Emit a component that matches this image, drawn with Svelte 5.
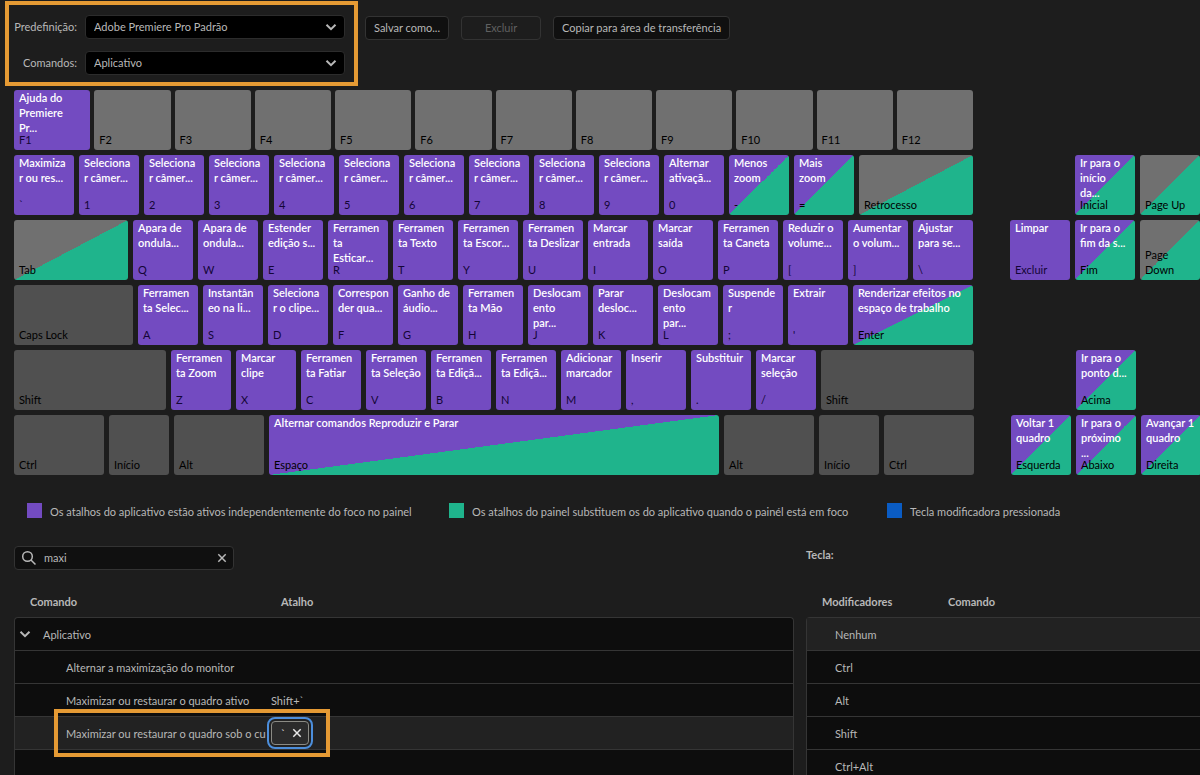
<script>
  let preset = $state('Adobe Premiere Pro Padrão')
  let scope = $state('Aplicativo')
  let search = $state('maxi')

  // k: key cap, c: assigned command, t: kind, w: width when not a square key
  const app = (k, c) => ({ k, c, t: 'app' })
  const both = (k, c, w) => ({ k, c, w, t: 'both' })
  const panel = (k, w) => ({ k, w, t: 'panel' })
  const mod = (k, w) => ({ k, w, t: 'mod' })
  const free = (k) => ({ k, t: 'free' })
  const gap = (w) => ({ w, t: 'gap' })

  const rows = [
    [
      app('`', 'Maximiza\nr ou res...'),
      ...[1, 2, 3, 4, 5, 6, 7, 8, 9].map((n) => app(n, 'Seleciona\nr câmer...')),
      app('0', 'Alternar\nativaçã...'),
      both('-', 'Menos\nzoom'),
      both('=', 'Mais\nzoom'),
      panel('Retrocesso', 114),
      gap(27), gap(60),
      both('Inicial', 'Ir para o\ninício\nda...'),
      panel('Page Up')
    ],
    [
      panel('Tab', 114),
      app('Q', 'Apara de\nondula...'),
      app('W', 'Apara de\nondula...'),
      app('E', 'Estender\nedição s...'),
      app('R', 'Ferramen\nta\nEsticar...'),
      app('T', 'Ferramen\nta Texto'),
      app('Y', 'Ferramen\nta Escor...'),
      app('U', 'Ferramen\nta Deslizar'),
      app('I', 'Marcar\nentrada'),
      app('O', 'Marcar\nsaída'),
      app('P', 'Ferramen\nta Caneta'),
      app('[', 'Reduzir o\nvolume...'),
      app(']', 'Aumentar\no volum...'),
      app('\\', 'Ajustar\npara se...'),
      gap(27),
      app('Excluir', 'Limpar'),
      both('Fim', 'Ir para o\nfim da s...'),
      panel('Page\nDown')
    ],
    [
      mod('Caps Lock', 119),
      app('A', 'Ferramen\nta Selec...'),
      app('S', 'Instantân\neo na li...'),
      app('D', 'Seleciona\nr o clipe...'),
      app('F', 'Correspon\nder qua...'),
      app('G', 'Ganho de\náudio...'),
      app('H', 'Ferramen\nta Mão'),
      app('J', 'Deslocam\nento\npar...'),
      app('K', 'Parar\ndesloc...'),
      app('L', 'Deslocam\nento\npar...'),
      app(';', 'Suspende\nr'),
      app("'", 'Extrair'),
      both('Enter', 'Renderizar efeitos no\nespaço de trabalho', 120)
    ],
    [
      mod('Shift', 152),
      app('Z', 'Ferramen\nta Zoom'),
      app('X', 'Marcar\nclipe'),
      app('C', 'Ferramen\nta Fatiar'),
      app('V', 'Ferramen\nta Seleção'),
      app('B', 'Ferramen\nta Ediçã...'),
      app('N', 'Ferramen\nta Ediçã...'),
      app('M', 'Adicionar\nmarcador'),
      app(',', 'Inserir'),
      app('.', 'Substituir'),
      app('/', 'Marcar\nseleção'),
      mod('Shift', 153),
      gap(27), gap(60),
      both('Acima', 'Ir para o\nponto d...')
    ],
    [
      mod('Ctrl', 90),
      mod('Início', 60),
      mod('Alt', 90),
      both('Espaço', 'Alternar comandos Reproduzir e Parar', 450),
      mod('Alt', 90),
      mod('Início', 60),
      mod('Ctrl', 90),
      gap(27),
      both('Esquerda', 'Voltar 1\nquadro'),
      both('Abaixo', 'Ir para o\npróximo\n...'),
      both('Direita', 'Avançar 1\nquadro')
    ]
  ]

  const fkeys = [
    app('F1', 'Ajuda do\nPremiere\nPr...'),
    ...[2, 3, 4, 5, 6, 7, 8, 9, 10, 11, 12].map((n) => free('F' + n))
  ]

  const modifiers = ['Nenhum', 'Ctrl', 'Alt', 'Shift', 'Ctrl+Alt']
</script>

{#snippet key(item)}
  {#if item.t === 'gap'}
    <span class="gap" style:width="{item.w}px"></span>
  {:else}
    <button class="key {item.t}" style:width={item.w ? item.w + 'px' : null}>
      <span class="command">{item.c ?? ''}</span>
      <span class="cap">{item.k}</span>
    </button>
  {/if}
{/snippet}

{#snippet chevron()}
  <svg class="chevron" viewBox="0 0 12 12" aria-hidden="true"><path d="M1.5 3.7 6 8.1l4.5-4.4" /></svg>
{/snippet}

{#snippet cross()}
  <svg class="cross" viewBox="0 0 10 10" aria-hidden="true"><path d="M1.3 1.3l7.4 7.4M8.7 1.3 1.3 8.7" /></svg>
{/snippet}

<main>
  <header>
    <div class="presets">
      <label for="preset">Predefinição:</label>
      <div class="select">
        <select id="preset" bind:value={preset}>
          <option>Adobe Premiere Pro Padrão</option>
        </select>
        {@render chevron()}
      </div>
      <label for="scope">Comandos:</label>
      <div class="select">
        <select id="scope" bind:value={scope}>
          <option>Aplicativo</option>
        </select>
        {@render chevron()}
      </div>
    </div>
    <div class="actions">
      <button class="action">Salvar como...</button>
      <button class="action wide" disabled>Excluir</button>
      <button class="action">Copiar para área de transferência</button>
    </div>
  </header>

  <section class="keyboard">
    <div class="row functions">
      {#each fkeys as item}{@render key(item)}{/each}
    </div>
    {#each rows as row}
      <div class="row">
        {#each row as item}{@render key(item)}{/each}
      </div>
    {/each}
  </section>

  <ul class="legend">
    <li><i class="violet"></i>Os atalhos do aplicativo estão ativos independentemente do foco no painel</li>
    <li><i class="green"></i>Os atalhos do painel substituem os do aplicativo quando o painél está em foco</li>
    <li><i class="blue"></i>Tecla modificadora pressionada</li>
  </ul>

  <div class="panels">
    <section class="commands">
      <div class="bar">
        <div class="search">
          <svg class="lens" viewBox="0 0 16 16" aria-hidden="true">
            <circle cx="6.5" cy="6.5" r="4.8" /><path d="M10 10l4.5 4.5" />
          </svg>
          <input type="text" aria-label="Pesquisar" bind:value={search} />
          <button class="plain" aria-label="Limpar" onclick={() => (search = '')}>{@render cross()}</button>
        </div>
      </div>
      <table>
        <thead>
          <tr><th>Comando</th><th>Atalho</th></tr>
        </thead>
        <tbody>
          <tr class="group"><td>{@render chevron()}Aplicativo</td><td></td></tr>
          <tr><td>Alternar a maximização do monitor</td><td></td></tr>
          <tr><td>Maximizar ou restaurar o quadro ativo</td><td>Shift+`</td></tr>
          <tr class="selected">
            <td>Maximizar ou restaurar o quadro sob o cursor</td>
            <td><button class="shortcut"><span>`</span>{@render cross()}</button></td>
          </tr>
        </tbody>
      </table>
    </section>

    <section class="modifiers">
      <div class="bar">Tecla:</div>
      <table>
        <thead>
          <tr><th>Modificadores</th><th>Comando</th></tr>
        </thead>
        <tbody>
          {#each modifiers as name, i}
            <tr class:current={i === 0}><td>{name}</td><td></td></tr>
          {/each}
        </tbody>
      </table>
    </section>
  </div>
</main>

<style>
  :global(body) {
    background: #1d1d1d;
  }

  main {
    --violet: #734bc1;
    --green: #1fb48c;
    --orange: #e59a34;
    --line: #353535;
    box-sizing: border-box;
    display: flex;
    flex-direction: column;
    height: 100vh;
    padding: 1px 0 0 14px;
    overflow: hidden;
    color: #b8b8b8;
    font: 11px/15px Lato, "Noto Sans", sans-serif;
  }

  button,
  select,
  input {
    box-sizing: border-box;
    font: inherit;
    color: inherit;
  }

  svg {
    fill: none;
    stroke: currentColor;
    flex: none;
  }

  .chevron {
    width: 12px;
    height: 12px;
    stroke-width: 2;
  }

  .cross {
    width: 10px;
    height: 10px;
    stroke-width: 1.5;
  }

  header {
    display: flex;
    gap: 7px;
    margin-left: -9px;
  }

  .presets {
    display: grid;
    grid-template-columns: 68px 260px;
    gap: 12px 8px;
    align-items: center;
    padding: 10px 9px 7px 0;
    border: 4px solid var(--orange);
  }

  .presets label {
    justify-self: end;
    padding-bottom: 2px;
    white-space: nowrap;
  }

  .select {
    position: relative;
  }

  select {
    display: block;
    width: 100%;
    height: 24px;
    padding: 0 24px 2px 8px;
    appearance: none;
    background: #000;
    border: 1px solid #2c2c2c;
    border-radius: 4px;
  }

  .select .chevron {
    position: absolute;
    top: 6px;
    right: 8px;
    pointer-events: none;
  }

  .actions {
    display: flex;
    align-items: flex-start;
    gap: 12px;
    padding-top: 15px;
  }

  .action {
    height: 24px;
    padding: 0 8px 2px;
    background: #101010;
    border: 1px solid #333;
    border-radius: 4px;
    white-space: nowrap;
  }

  .action.wide {
    width: 80px;
  }

  .action:disabled {
    background: none;
    color: #606060;
  }

  .keyboard {
    display: flex;
    flex-direction: column;
    gap: 5px;
    margin-top: 4px;
  }

  .row {
    display: flex;
    gap: 5px;
  }

  .functions {
    width: 959px;
    gap: 4px;
  }

  .functions .key {
    flex: 1;
  }

  .gap {
    flex: none;
  }

  .key {
    display: flex;
    flex: none;
    flex-direction: column;
    justify-content: space-between;
    width: 60px;
    height: 60px;
    padding: 0 0 3px 5px;
    border: 0;
    border-radius: 3px;
    color: #000;
    text-align: left;
    white-space: pre;
  }

  .command {
    height: 40px;
    color: #fff;
    font-weight: 600;
  }

  .app {
    background: var(--violet);
    color: #140536;
  }

  .both {
    background: linear-gradient(to bottom right, var(--violet) 50%, var(--green) 50%);
  }

  .panel {
    background: linear-gradient(to bottom right, #707070 50%, var(--green) 50%);
  }

  .panel .command {
    height: 0;
  }

  .free {
    background: #707070;
  }

  .mod {
    background: #505050;
  }

  .legend {
    display: grid;
    grid-template-columns: 422px 438px auto;
    margin: 28px 0 0 13px;
    padding: 0;
    list-style: none;
    line-height: 17px;
    white-space: nowrap;
  }

  .legend li {
    display: flex;
    align-items: flex-start;
    gap: 8px;
  }

  .legend i {
    width: 15px;
    height: 15px;
  }

  .violet {
    background: var(--violet);
  }

  .green {
    background: var(--green);
  }

  .blue {
    background: #0a5cc4;
  }

  .panels {
    display: grid;
    grid-template-columns: 780fr 394fr;
    gap: 12px;
    flex: 1;
    margin-top: 26px;
    min-height: 0;
  }

  .commands,
  .modifiers {
    display: flex;
    flex-direction: column;
    min-width: 0;
    min-height: 0;
  }

  .bar {
    height: 24px;
    font-weight: 700;
    line-height: 17px;
  }

  .search {
    box-sizing: border-box;
    display: flex;
    align-items: center;
    width: 220px;
    height: 24px;
    padding: 0 6px;
    background: #101010;
    border: 1px solid #333;
    border-radius: 4px;
    font-weight: 400;
  }

  .lens {
    width: 16px;
    height: 16px;
    stroke-width: 1.5;
  }

  .search input {
    flex: 1;
    min-width: 0;
    height: 20px;
    padding: 0 7px 2px;
    background: none;
    border: 0;
    outline: 0;
  }

  .plain {
    display: flex;
    padding: 0;
    background: none;
    border: 0;
  }

  table {
    display: flex;
    flex: 1;
    flex-direction: column;
    min-height: 0;
  }

  thead {
    display: block;
    padding: 24px 0 8px 16px;
  }

  th {
    padding: 0;
    text-align: left;
    font-weight: 700;
  }

  tbody {
    display: block;
    flex: 1;
    min-height: 0;
    background: #0d0d0d;
    border: 1px solid var(--line);
    border-bottom: 0;
    border-radius: 4px 4px 0 0;
  }

  tr {
    display: grid;
    align-items: center;
  }

  .commands tr {
    grid-template-columns: 251px 1fr;
  }

  .modifiers tr {
    grid-template-columns: 126px 1fr;
  }

  tbody tr {
    position: relative;
    height: 32px;
    border-bottom: 1px solid var(--line);
  }

  td {
    padding: 0;
    overflow: hidden;
    white-space: nowrap;
  }

  .commands td:first-child {
    padding-left: 51px;
  }

  .commands td:last-child {
    padding-left: 5px;
    overflow: visible;
  }

  .commands .group td:first-child {
    display: flex;
    align-items: center;
    gap: 12px;
    padding-left: 4px;
  }

  .modifiers td:first-child {
    padding-left: 28px;
  }

  .modifiers tbody {
    border-right: 0;
    border-top-right-radius: 0;
  }

  .current,
  .selected {
    background: #222;
  }

  .shortcut {
    display: flex;
    align-items: center;
    justify-content: space-between;
    width: 38px;
    height: 24px;
    padding: 0 6px 0 9px;
    background: #2b2b2b;
    border: 1px solid #8b8b85;
    border-radius: 4px;
    outline: 2px solid #4c8edb;
    outline-offset: 2px;
    color: #e8e8e8;
  }

  /* callout around the selected shortcut */
  .selected::after {
    content: "";
    position: absolute;
    top: -8px;
    left: 39px;
    box-sizing: border-box;
    width: 276px;
    height: 48px;
    border: 4px solid var(--orange);
    pointer-events: none;
  }
</style>
